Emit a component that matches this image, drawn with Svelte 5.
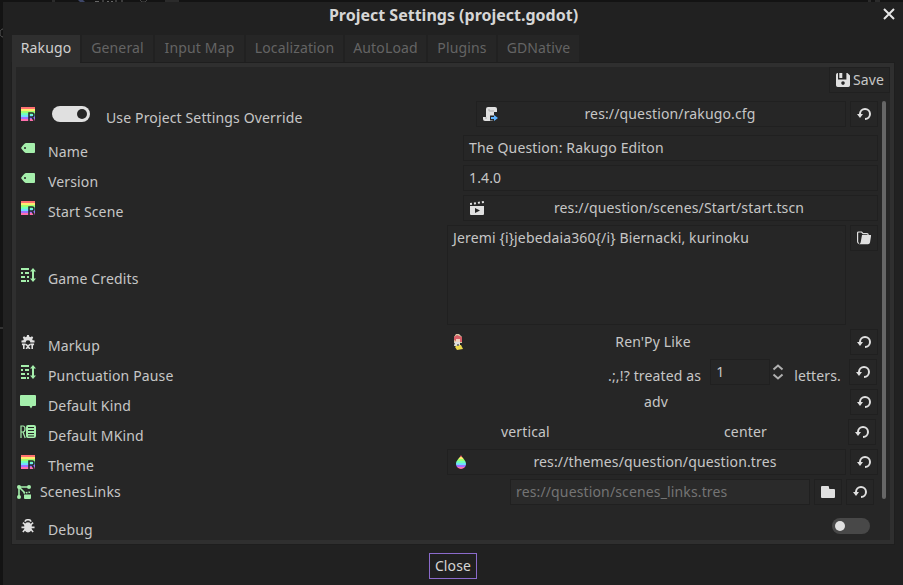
<script>
  const tabs = [
    { name: 'Rakugo', w: 68 },
    { name: 'General', w: 71 },
    { name: 'Input Map', w: 89 },
    { name: 'Localization', w: 97 },
    { name: 'AutoLoad', w: 81 },
    { name: 'Plugins', w: 68 },
    { name: 'GDNative', w: 81 }
  ];
</script>

{#snippet reload()}
  <svg class="ic big" viewBox="0 0 16 16"><path fill="#e0e0e0" d="m9 2a6 6 0 0 0-6 6h-2l3 4 3-4h-2a4 4 0 0 1 4-4 4 4 0 0 1 4 4 4 4 0 0 1-4 4v2a6 6 0 0 0 6-6 6 6 0 0 0-6-6z" /></svg>
{/snippet}

{#snippet rakugo()}
  <svg class="ic" viewBox="0 0 14 14" shape-rendering="crispEdges">
    <path fill="#ff7070" d="M0 0h14v2H0z" /><path fill="#ffeb70" d="M0 2h14v2H0z" />
    <path fill="#9dff70" d="M0 4h14v2H0z" /><path fill="#70ffb9" d="M0 6h14v2H0z" />
    <path fill="#70deff" d="M0 8h14v2H0z" /><path fill="#9f70ff" d="M0 10h14v2H0z" />
    <path fill="#ff70ac" d="M0 12h14v2H0z" />
    <path shape-rendering="auto" d="M8 14V6h3.2q1.800 0 1.800 2t-1.800 2H8m3 0 2.300 4" fill="none" stroke="#252a2d" stroke-width="1.600" />
  </svg>
{/snippet}

{#snippet tag()}
  <svg class="ic" viewBox="0 0 14 14"><path fill="#a5efac" fill-rule="evenodd" d="M5 2h8q1 0 1 1v8q0 1-1 1H5Q3.500 12 0 7 3.500 2 5 2zM4 6a1 1 0 1 0 .01 2A1 1 0 0 0 4 6z" /></svg>
{/snippet}

{#snippet lines()}
  <svg class="ic wide" viewBox="0 0 15 14">
    <path fill="none" stroke="#a5efac" stroke-width="2" d="M0 1h8M0 5h2m2 0h4M0 9h4m2 0h2M0 13h5m1 0h2M12 2v10" />
    <path fill="#a5efac" d="m12 0 3 3.500H9zM12 14 9 10.500h6z" />
  </svg>
{/snippet}

<div class="screen">
  <div class="behind">
    <svg class="rest" width="903" height="2">
      <path d="M52 1h3M140 0l2 2h3l2-2M165 1h14M868 1h3M875 1h5" fill="none" stroke="#454545" />
      <path d="M78 0h5l2 2h-5z" fill="#3d4668" />
      <path d="M95 1.500h4M103 0v2M107 1.500h2M111 1.500h2M116 0v2M122 0v2" fill="none" stroke="#666" />
    </svg>
    <svg class="edge" width="3" height="400"><path d="M3 29c-4 0-4 8 0 8M0 328h3" fill="none" stroke="#555" /></svg>
  </div>

  <div class="dialog">
    <header>
      <h1>Project Settings (project.godot)</h1>
      <svg class="x" viewBox="0 0 12 12"><path d="m1 1 10 10M11 1 1 11" stroke="#e6e6e6" stroke-width="2" /></svg>
    </header>

    <nav>
      {#each tabs as t, i}
        <span class="tab" class:active={i === 0} style="width:{t.w}px">{t.name}</span>
      {/each}
    </nav>

    <main>
      <div class="toolbar">
        <div class="box save">
          <svg class="ic" viewBox="0 0 14 14">
            <path fill="#e0e0e0" fill-rule="evenodd" d="M1.700 0H2v6.400h8.400V0h1L14 2.600v9.700q0 1.700-1.700 1.700H1.700Q0 14 0 12.300V1.700Q0 0 1.700 0zM7 8.300a1.800 1.800 0 1 0 .01 3.600A1.800 1.800 0 0 0 7 8.300z" />
            <path fill="#e0e0e0" d="M3.300 0h3v5h-3z" />
          </svg>
          <span>Save</span>
        </div>
      </div>

      <div class="scroll">
        <div class="rows">
          <div class="row first">
            {@render rakugo()}
            <span class="toggle on"><i></i></span>
            <label class="l1">Use Project Settings Override</label>
            <div class="ctl">
              <div class="box path" style="width:370px">
                <svg class="ic wide" viewBox="0 0 15 14">
                  <path fill="#e0e0e0" d="M5 0h7q2 0 2 2v3h-3v6q0 3-3 3H2q-2 0-2-2v-2h3V2q0-2 2-2z" />
                  <path d="M6 2v2h5M3 10v2" fill="none" stroke="#aaa" />
                  <path d="M7 11h5" stroke="#262626" stroke-width="5" />
                  <path fill="#5fb2ff" d="M8 10h3V8l4 3-4 3v-2H8z" />
                </svg>
                <span>res://question/rakugo.cfg</span>
              </div>
              <div class="box sq">{@render reload()}</div>
            </div>
          </div>

          <div class="row">
            {@render tag()}<label>Name</label>
            <div class="ctl"><div class="box input" style="width:415px">The Question: Rakugo Editon</div></div>
          </div>

          <div class="row">
            {@render tag()}<label>Version</label>
            <div class="ctl"><div class="box input" style="width:415px">1.4.0</div></div>
          </div>

          <div class="row">
            {@render rakugo()}<label>Start Scene</label>
            <div class="ctl">
              <div class="box path" style="width:415px">
                <svg class="ic" viewBox="0 0 14 14">
                  <path fill="#e0e0e0" fill-rule="evenodd" d="M0 5h14v8q0 1-1 1H1q-1 0-1-1zm5 2v5l5-2.500z" />
                  <path d="m0 3 14-2" stroke="#e0e0e0" stroke-width="2" stroke-dasharray="2 2" />
                </svg>
                <span>res://question/scenes/Start/start.tscn</span>
              </div>
            </div>
          </div>

          <div class="row tall">
            {@render lines()}<label class="near">Game Credits</label>
            <div class="ctl top">
              <div class="box area" style="width:399px">Jeremi &#123;i&#125;jebedaia360&#123;/i&#125; Biernacki, kurinoku</div>
              <div class="box sq">
                <svg class="ic" viewBox="0 0 14 14">
                  <path d="M2 12.500Q.6 12 .6 10.500V2q0-1 1-1h3l1.500 1.600h4q1 0 1 1v1" fill="none" stroke="#e0e0e0" stroke-width="1.200" />
                  <path fill="#e0e0e0" d="M5 4h9.200L13 11.500Q12.700 13.200 11 13.200H2q1.400-.5 1.700-2z" />
                </svg>
              </div>
            </div>
          </div>

          <div class="row">
            <svg class="ic" viewBox="0 0 14 15">
              <path fill="#e0e0e0" d="M6 0h2l.5 2 1 .5L11.300 1.400l1.300 1.300-1.100 1.800.5 1 2 .5v2H9.500q0-2.500-2.500-2.500T4.500 8H0V6l2-.5.500-1-1.100-1.800 1.300-1.300 1.800 1.100 1-.5z" />
              <path d="M.5 10h4M2.500 10v5M5 10l4 5M9 10l-4 5M9.500 10h4M11.500 10v5" fill="none" stroke="#e0e0e0" stroke-width="1.700" />
            </svg>
            <label>Markup</label>
            <div class="ctl">
              <div class="path plain" style="width:399px">
                <svg class="renpy" viewBox="0 0 10 16">
                  <path fill="#d8caa8" d="M3 0h3l3 3v6H1V3z" /><path fill="#d75e66" d="M1 3l3-2 5 2v5H7V5H3v2L1 6z" />
                  <path fill="#f0d3c1" d="M3 5h4v3H3z" /><path fill="#ddd" d="M2 8h5v4H1z" />
                  <path fill="#edd94b" d="M4 11h4l2 4-6 1-2-3z" /><path fill="#777" d="M4 10h2v2H4z" />
                </svg>
                <span>Ren'Py Like</span>
              </div>
              <div class="box sq">{@render reload()}</div>
            </div>
          </div>

          <div class="row">
            {@render lines()}<label class="near">Punctuation Pause</label>
            <div class="ctl shift1">
              <span class="low">.;,!? treated as</span>
              <div class="box num">1</div>
              <svg class="spin" viewBox="0 0 12 16"><path d="m1.500 5.500 4.500-4 4.500 4M1.500 10.500l4.500 4 4.500-4" fill="none" stroke="#b0b0b0" stroke-width="2" /></svg>
              <span class="low letters">letters.</span>
              <div class="box sq">{@render reload()}</div>
            </div>
          </div>

          <div class="row">
            <svg class="ic bubble" viewBox="0 0 16 14"><path fill="#a5efac" d="M1 0h14q1 0 1 1v9q0 1-1 1h-2.500L11 13.500 9.500 11H1q-1 0-1-1V1q0-1 1-1z" /></svg>
            <label class="bub">Default Kind</label>
            <div class="ctl">
              <div class="plain mid" style="width:399px"><span class="adv">adv</span></div>
              <div class="box sq">{@render reload()}</div>
            </div>
          </div>

          <div class="row">
            <svg class="ic bubble" viewBox="0 0 16 14">
              <path d="M1 13V1h2q2 0 2 3T3 7H1m2 0 2.200 6" fill="none" stroke="#a5efac" stroke-width="1.200" />
              <path fill="#a5efac" fill-rule="evenodd" d="M8 0h6q2 0 2 2v9q0 2-2 2H8q-2 0-2-2V2q0-2 2-2zm0 2v1h6V2zm0 3v1h6V5zm0 3v1h6V8zm0 2.500v1h6v-1z" />
            </svg>
            <label class="bub">Default MKind</label>
            <div class="ctl shift2">
              <span class="vert">vertical</span><span class="cent">center</span>
              <div class="box sq">{@render reload()}</div>
            </div>
          </div>

          <div class="row">
            {@render rakugo()}<label>Theme</label>
            <div class="ctl">
              <div class="box path" style="width:399px">
                <svg class="ic" viewBox="0 0 14 14">
                  <clipPath id="drop"><path d="M7 0c.8 2.800 5 5 5 9a5 5 0 0 1-10 0c0-4 4.200-6.200 5-9z" /></clipPath>
                  <g clip-path="url(#drop)">
                    <path fill="#ff7070" d="M0 0h14v2H0z" /><path fill="#ffeb70" d="M0 2h14v2H0z" />
                    <path fill="#9dff70" d="M0 4h14v2H0z" /><path fill="#70ffb9" d="M0 6h14v2H0z" />
                    <path fill="#70deff" d="M0 8h14v2H0z" /><path fill="#9f70ff" d="M0 10h14v2H0z" />
                    <path fill="#ff70ac" d="M0 12h14v2H0z" />
                  </g>
                </svg>
                <span>res://themes/question/question.tres</span>
              </div>
              <div class="box sq">{@render reload()}</div>
            </div>
          </div>

          <div class="row links">
            <svg class="ic" viewBox="0 0 14 14">
              <path d="M2 2v10M2 2h10M2 2l6 6" fill="none" stroke="#a5efac" stroke-width="1.600" />
              <g fill="#a5efac"><circle cx="2" cy="2" r="2" /><circle cx="12" cy="2" r="2" /><circle cx="2" cy="12" r="2" /><path d="M7 9.500h7V13q0 1-1 1H8q-1 0-1-1z" /></g>
              <path d="m6.500 8 7.500-1" stroke="#a5efac" stroke-width="1.500" stroke-dasharray="1.500 1" />
            </svg>
            <label class="flat">ScenesLinks</label>
            <div class="ctl shift4">
              <div class="box input dim" style="width:300px">res://question/scenes_links.tres</div>
              <div class="box sq"><svg class="ic big" viewBox="0 0 16 16"><path fill="#e0e0e0" d="M2 2a1 1 0 0 0-1 1v10a1 1 0 0 0 1 1h12a1 1 0 0 0 1-1V6a1 1 0 0 0-1-1h-4a1 1 0 0 1-1-1V3a1 1 0 0 0-1-1z" /></svg></div>
              <div class="box sq">{@render reload()}</div>
            </div>
          </div>

          <div class="row debug">
            <svg class="ic" viewBox="0 0 14 15">
              <path d="M4 3Q4 .8 7 .8T10 3M1.500 4l3 2.500M12.500 4l-3 2.500M0 9h14M1.500 14 4 11m8.500 3L10 11" fill="none" stroke="#e0e0e0" stroke-width="1.700" />
              <path fill="#e0e0e0" d="M7 3.500q3 0 3 2h1v4q0 4.500-4 5-4-.5-4-5v-4h1q0-2 3-2z" />
            </svg>
            <label>Debug</label>
            <div class="ctl shift8"><span class="toggle off"><i></i></span></div>
          </div>
        </div>
        <div class="bar"></div>
      </div>
    </main>

    <footer><button>Close</button></footer>
  </div>
</div>

<style>
  :global(body) { background: #131313; }
  .screen {
    position: relative; width: 903px; height: 585px; box-sizing: border-box; overflow: hidden;
    padding: 2px 0 0 3px; background: #131313; color: #c6c6c6;
    font: 14px/20px "Noto Sans", sans-serif; letter-spacing: 0.14px;
  }
  .screen *, .screen *::before { box-sizing: border-box; }
  .behind { position: absolute; inset: 0; overflow: hidden; }
  .rest, .edge { position: absolute; left: 0; top: 0; }
  .dialog { position: relative; height: 583px; background: #212121; display: flex; flex-direction: column; }
  header { height: 33px; display: flex; align-items: flex-start; }
  h1 { flex: 1; margin: 0; padding: 3px 0 0 21px; text-align: center; font-size: 16px; line-height: 20px; font-weight: 700; letter-spacing: 0; color: #d6d6d6; }
  .x { width: 12px; height: 12px; margin: 6px 8px 0 0; }
  nav { position: relative; z-index: 1; height: 28px; padding-left: 9px; display: flex; gap: 2px; }
  .tab { height: 27px; line-height: 26px; text-align: center; background: #262626; color: #646464; }
  .tab.active { height: 28px; background: #2f2f2f; color: #d0d0d0; }
  main { width: 882px; height: 481px; margin-left: 9px; border: 4px solid #2f2f2f; background: #262626; box-shadow: 0 0 0 1px #1e1e1e; display: flex; flex-direction: column; }
  .toolbar { display: flex; justify-content: flex-end; height: 34px; }
  .box { border: 1px solid #202020; height: 26px; line-height: 24px; white-space: nowrap; background: #262626; }
  .save { width: 61px; display: flex; align-items: center; padding-left: 6px; gap: 3px; }
  .ic { width: 14px; height: 14px; flex: none; display: block; }
  .ic.wide { width: 15px; }
  .ic.big { width: 16px; height: 16px; }
  .scroll { display: flex; flex: 1; }
  .rows { width: 862px; display: flex; flex-direction: column; gap: 4px; }
  .bar { width: 4px; height: 398px; margin-left: 4px; border-radius: 2px; background: #666; }
  .row { height: 26px; padding-left: 5px; display: flex; align-items: center; }
  .first { margin-bottom: 4px; }
  .tall { height: 100px; }
  label { margin-left: 13px; padding-top: 8px; white-space: nowrap; }
  label.near { margin-left: 12px; }
  .ic.bubble { width: 16px; margin-left: -1px; }
  label.bub { margin-left: 12px; }
  label.l1 { margin-left: 16px; }
  label.flat { padding: 0; margin-left: 9px; }
  .links { padding-left: 1px; }
  .debug { margin-top: 4px; }
  .ctl { margin-left: auto; display: flex; gap: 4px; align-items: center; white-space: nowrap; }
  .top { align-self: flex-start; align-items: flex-start; }
  .shift1 { margin-right: 1px; }
  .shift2 { margin-right: 2px; }
  .shift4 { margin-right: 4px; }
  .shift8 { margin-right: 8px; }
  .sq { width: 28px; display: flex; align-items: center; justify-content: center; }
  .path { display: flex; align-items: center; padding: 0 3px 0 6px; }
  .path span { flex: 1; text-align: center; }
  .plain { height: 26px; line-height: 24px; }
  .mid { text-align: center; line-height: 26px; }
  .adv { margin-left: 19px; }
  .input { padding-left: 5px; }
  .dim { background: #2a2a2a; color: #747474; }
  .area { height: 100px; padding-left: 5px; }
  .renpy { width: 10px; height: 16px; }
  .low { padding-top: 8px; }
  .num { width: 60px; margin-left: 5px; padding-left: 5px; }
  .spin { width: 12px; height: 16px; margin-left: -2px; }
  .letters { margin-left: 6px; margin-right: 4px; }
  .vert { width: 219px; text-align: left; }
  .cent { width: 120px; }
  .toggle { width: 38px; height: 16px; border-radius: 8px; display: flex; align-items: center; }
  .toggle i { width: 10px; height: 10px; border-radius: 50%; }
  .on { margin-left: 17px; background: #e0e0e0; justify-content: flex-end; padding-right: 3px; }
  .on i { background: #262626; }
  .off { background: #484848; padding-left: 3px; }
  .off i { background: #e0e0e0; }
  footer { display: flex; justify-content: center; padding: 9px 0 0 0; }
  button { width: 48px; height: 26px; padding: 0; border: 1px solid #8b6bcb; background: #202020; color: #d6d6d6; font: 14px/22px "Noto Sans", sans-serif; letter-spacing: 0.14px; }
</style>
